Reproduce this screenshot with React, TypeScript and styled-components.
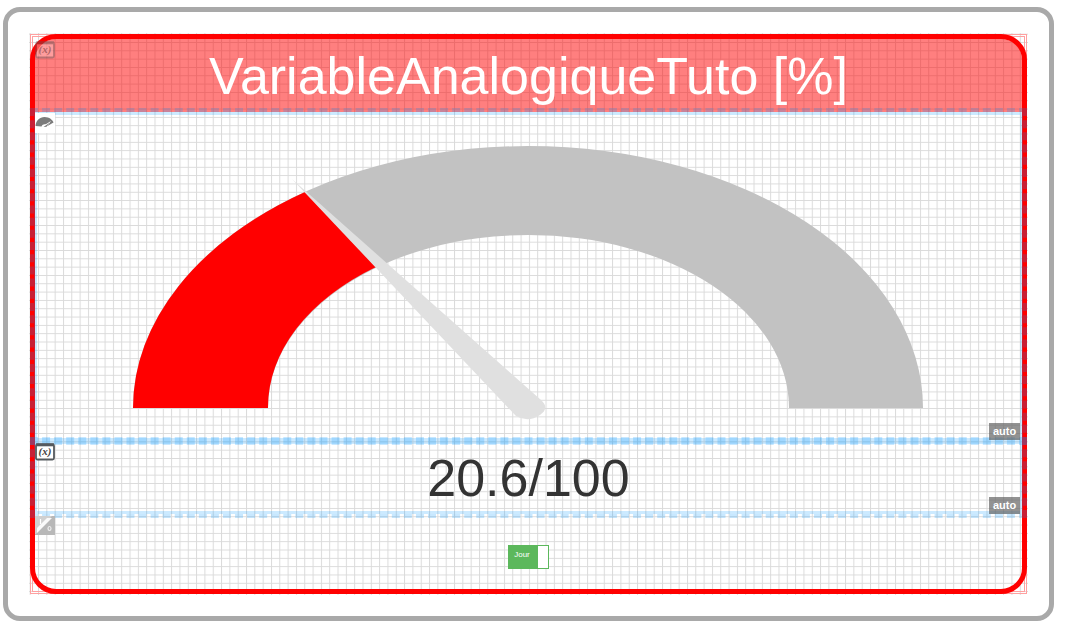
import React from "react";
import styled, { createGlobalStyle } from "styled-components";

const GlobalStyle = createGlobalStyle`
  *, *::before, *::after { box-sizing: border-box; }
  body {
    margin: 0;
    background: #fff;
    font-family: "Liberation Sans", Arial, Helvetica, sans-serif;
  }
`;

const Page = styled.main`
  padding: 7px 12px 4px 3px;
`;

const Frame = styled.div`
  border: 5px solid #a9a9a9;
  border-radius: 17px;
  padding: 21px;
`;

const Canvas = styled.div`
  position: relative;
  padding: 1px;
`;

const GridLines = styled.svg`
  position: absolute;
  inset: 0;
  width: 100%;
  height: 100%;
`;

const CanvasEdge = styled.div`
  position: absolute;
  inset: 1px;
  border: 3px double #ffa0a0;
`;

const Card = styled.section`
  position: relative;
  border: 5px solid #f00;
  border-radius: 26px;
`;

const Cell = styled.div<{ $height?: number; $top?: number }>`
  position: relative;
  min-height: ${(p) => p.$height ?? 0}px;
  padding-top: ${(p) => p.$top ?? 0}px;
  text-align: center;
`;

const TitleCell = styled(Cell)`
  background: linear-gradient(rgba(255, 0, 0, 0.5), rgba(255, 0, 0, 0.5)) 0 0 / 100% 73px no-repeat;
  border-radius: 20px 20px 0 0;
`;

const Title = styled.h1`
  margin: 0;
  padding-top: 8px;
  font-size: 52px;
  line-height: 58px;
  font-weight: 400;
  color: #fff;
  white-space: nowrap;
`;

const Value = styled.output`
  display: block;
  padding-top: 8px;
  font-size: 52px;
  line-height: 58px;
  color: #333;
`;

const Selection = styled.div<{ $top: number; $bottom: number }>`
  position: absolute;
  z-index: 1;
  inset: ${(p) => p.$top}px -5px ${(p) => p.$bottom}px -5px;
  border: 4px dashed rgba(0, 150, 255, 0.21);
  box-shadow: inset 0 0 0 3px rgba(0, 150, 255, 0.2);
  pointer-events: none;
`;

const Badge = styled.span`
  position: absolute;
  z-index: 2;
  right: 2px;
  bottom: 1px;
  width: 31px;
  background: rgba(100, 100, 100, 0.7);
  color: #fff;
  font-size: 11px;
  line-height: 17px;
  font-weight: 700;
`;

const CellIcon = styled.svg<{ $faded?: boolean }>`
  position: absolute;
  z-index: 2;
  left: 0;
  top: 0;
  width: 20px;
  height: 20px;
  opacity: ${(p) => (p.$faded ? 0.4 : 1)};
`;

const Gauge = styled.svg`
  display: block;
  width: 100%;
  height: auto;
`;

const Toggle = styled.button`
  display: inline-flex;
  width: 41px;
  height: 24px;
  padding: 0;
  border: 1px solid #5cb85c;
  background: #fff;
  vertical-align: top;
  cursor: pointer;
`;

const ToggleLabel = styled.span`
  width: 29px;
  height: 22px;
  padding-right: 3px;
  background: #5cb85c;
  color: #fff;
  font-family: "Liberation Sans", Arial, sans-serif;
  font-size: 8px;
  line-height: 17px;
`;

function VariableIcon({ faded }: { faded?: boolean }) {
  return (
    <CellIcon viewBox="0 0 20 20" $faded={faded} aria-hidden="true">
      <rect x="1" y="3.500" width="18" height="15" rx="1.500" fill={faded ? "#fcc" : "#fff"} stroke="#555a5e" strokeWidth="1.800" />
      <path d="M1 3.800h18" stroke="#555a5e" strokeWidth="3" />
      <text x="10" y="14" textAnchor="middle" fontFamily="Liberation Serif, serif" fontStyle="italic" fontWeight="700" fontSize="11" fill="#444">(x)</text>
    </CellIcon>
  );
}

function GaugeIcon() {
  return (
    <CellIcon viewBox="0 0 20 20" aria-hidden="true">
      <path d="M0 0h20v20H0z" fill="#fff" />
      <path d="M.5 13C1 7.500 4.500 4 9.500 4s8 3 9 5.500L12.500 13c-1-2.500-5-2.500-6 .5z" fill="#7b7b7b" />
      <path d="M8 13l8-5-3.500 5z" fill="#fff" />
      <path d="M8.500 14l6.500-4.500-3.500 4.200z" fill="#7b7b7b" />
    </CellIcon>
  );
}

function SwitchIcon() {
  return (
    <CellIcon viewBox="0 0 20 20" aria-hidden="true">
      <path d="M0 1h20v19H0z" fill="#b8b8b8" />
      <path d="M0 1h17L1 19H0z" fill="#d0d0d0" />
      <path d="M2 18L17 3h-5L2 13z" fill="#fafafa" />
      <path d="M5.500 4v5" stroke="#fff" strokeWidth="1.200" />
      <ellipse cx="14.500" cy="13.500" rx="1.500" ry="2" fill="none" stroke="#eee" strokeWidth="1.200" />
    </CellIcon>
  );
}

export default function App() {
  return (
    <Page>
      <GlobalStyle />
      <Frame>
        <Canvas>
          <GridLines aria-hidden="true">
            <defs>
              <pattern id="grid" width="10" height="10" patternUnits="userSpaceOnUse" patternTransform="translate(.7 .7) scale(.832)">
                <path d="M0 .6h10M.6 0v10" stroke="#dadada" strokeWidth="1.200" fill="none" />
              </pattern>
            </defs>
            <rect width="100%" height="100%" fill="url(#grid)" />
          </GridLines>
          <CanvasEdge />
          <Card>
            <TitleCell $height={74}>
              <VariableIcon faded />
              <Title>VariableAnalogiqueTuto [%]</Title>
            </TitleCell>
            <Cell>
              <GaugeIcon />
              <Gauge viewBox="35 113 987 328" role="img" aria-label="20.6 / 100">
                <path d="M133 408A395 262 0 0 1 923 408H789A260.500 173 0 0 0 268 408Z" fill="#c2c2c2" />
                <path d="M133 408A395 262 0 0 1 305 192L376 267A260.500 173 0 0 0 268 408Z" fill="#f00" />
                <path d="M292 179L541 400Q550 408 540 415Q528 423 516 416Z" fill="#e0e0e0" />
              </Gauge>
              <Selection $top={-5} $bottom={-4} />
              <Badge>auto</Badge>
            </Cell>
            <Cell $height={74}>
              <VariableIcon />
              <Value>20.6/100</Value>
              <Selection $top={-4} $bottom={-3} />
              <Badge>auto</Badge>
            </Cell>
            <Cell $height={74} $top={30}>
              <SwitchIcon />
              <Toggle type="button" role="switch" aria-checked="true">
                <ToggleLabel>Jour</ToggleLabel>
              </Toggle>
            </Cell>
          </Card>
        </Canvas>
      </Frame>
    </Page>
  );
}
